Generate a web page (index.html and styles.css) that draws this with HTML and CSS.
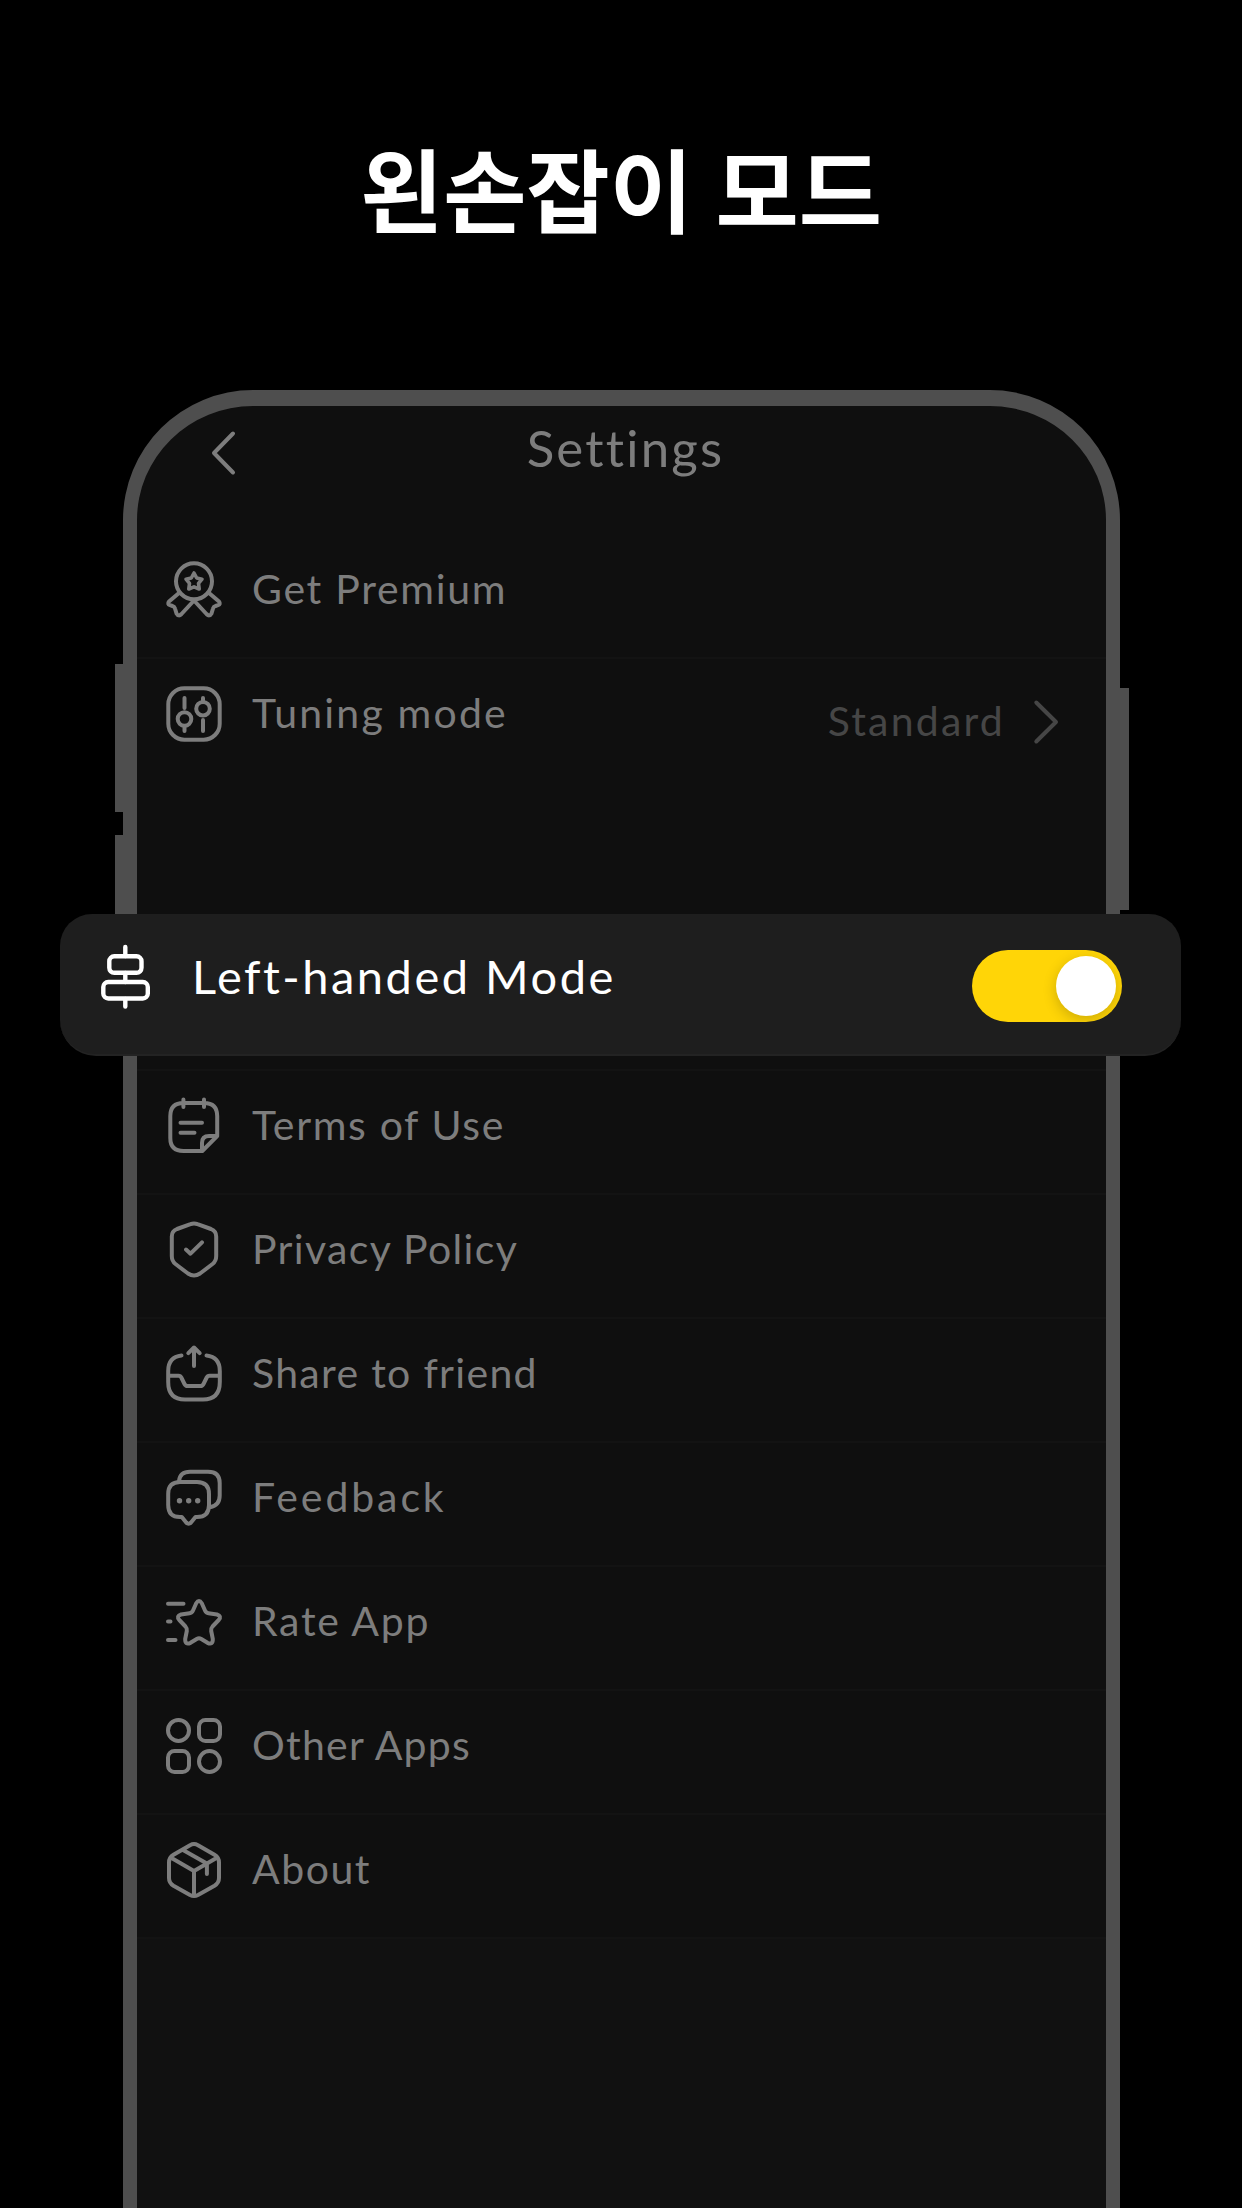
FILE: index.html
```html
<!DOCTYPE html>
<html lang="ko">
<head>
<meta charset="utf-8">
<title>왼손잡이 모드</title>
<link rel="stylesheet" href="styles.css">
</head>
<body>
<main class="stage">
  <h1 class="title">왼손잡이 모드</h1>
  <div class="phone">
    <span class="side-button side-button--upper"></span>
    <span class="side-button side-button--lower"></span>
    <span class="side-button side-button--power"></span>
    <header class="topbar">
      <svg class="back" viewBox="0 0 30 50"><path d="M24 5.500 5 25 24 44.500"/></svg>
      <h2 class="heading">Settings</h2>
    </header>
    <ul class="list">
      <li class="row">
        <svg class="icon" viewBox="0 0 60 60"><circle cx="30" cy="21.300" r="18"/><path class="fine" d="M30 13 32.700 18 38 19.200 34.500 23.400 35.200 29 30 26.800 24.800 29 25.500 23.400 22 19.200 27.300 18Z"/><path d="M15 33 5 41.500Q3 44 6 45.200L8.500 46Q10.500 46.500 11 48.500L12.500 53.500Q14.500 57 17.500 54L30 40.500 42.500 54Q45.500 57 47.500 53.500L49 48.500Q49.500 46.500 51.500 46L54 45.200Q57 44 55 41.500L45 33"/></svg>
        <span class="label l-premium">Get Premium</span>
      </li>
      <li class="row row--last">
        <svg class="icon" viewBox="0 0 60 60"><rect x="4.300" y="4.300" width="51.400" height="51.400" rx="16"/><path d="M20.500 14V24M20.500 42V47M39 14V17M39 36V47"/><circle cx="20.500" cy="35" r="6.800"/><circle cx="39" cy="24.700" r="6.800"/></svg>
        <span class="label l-tuning">Tuning mode</span>
        <span class="value">Standard</span>
        <svg class="chevron" viewBox="0 0 30 50"><path d="M5.300 5.500 25 25 5.300 44.500"/></svg>
      </li>
    </ul>
    <section class="card">
      <svg class="card-icon" viewBox="0 0 60 72"><path d="M30.300 7V16M30.300 33V42M30.300 59V66.500"/><rect x="14.300" y="16.300" width="32.200" height="16.500" rx="5"/><rect x="8.300" y="42" width="44.500" height="16.500" rx="5"/></svg>
      <span class="card-label">Left-handed Mode</span>
      <span class="toggle"><span class="knob"></span></span>
    </section>
    <ul class="list list--lower">
      <li class="row">
        <svg class="icon" viewBox="0 0 60 60"><path d="M53.200 40V20Q53.200 7 40 7H19.500Q6.300 7 6.300 20V42Q6.300 55 19.500 55H38.300L53.200 40H45Q38 40 38 47V55M19.400 3.500V11M40 3.500V11M16.500 26.700H38M16.500 36.700H30.500"/></svg>
        <span class="label l-terms">Terms of Use</span>
      </li>
      <li class="row">
        <svg class="icon" viewBox="0 0 60 60"><path d="M26.500 4.200Q30 2.800 33.500 4.200L47 9Q52.200 11 52.200 16.500V36Q52.200 41 48.500 44L36 53.500Q30 57.500 24 53.500L11.500 44Q7.800 41 7.800 36V16.500Q7.800 11 13 9ZM22 29.500 26.500 33.700 38 22.300"/></svg>
        <span class="label l-privacy">Privacy Policy</span>
      </li>
      <li class="row">
        <svg class="icon" viewBox="0 0 60 60"><path d="M17.500 11.500Q4.200 13 4.200 27V38Q4.200 55.500 21 55.500H39Q55.800 55.500 55.800 38V27Q55.800 13 42.500 11.500M4.200 31.700H14.500Q16.500 31.700 17.300 33.500L20.500 40Q21.500 42 23.500 42H36.500Q38.500 42 39.500 40L42.700 33.500Q43.500 31.700 45.500 31.700H55.800M30 22V3.500M24.300 9.200 30 3.500 35.700 9.200"/></svg>
        <span class="label l-share">Share to friend</span>
      </li>
      <li class="row">
        <svg class="icon" viewBox="0 0 60 60"><path d="M16 14H33Q45 14 45 26V37Q45 49 33 49H31.500L27 54.500Q24.600 57 22.200 54.500L17.800 49H16Q4.200 49 4.200 37V26Q4.200 14 16 14ZM15 13Q16 3.800 26 3.800H44Q55.700 3.800 55.700 15V27.500Q55.700 37.500 46 39.200"/><path class="dots" d="M15.500 32.700h.01M24.700 32.700h.01M33.700 32.700h.01"/></svg>
        <span class="label l-feedback">Feedback</span>
      </li>
      <li class="row">
        <svg class="icon" viewBox="0 0 60 60"><path d="M4 11.700H19.500M4 29.500H6.500M4 48H11.500"/><path d="M32.200 11.300Q35 6.800 37.800 11.300L41 18.500Q42 21 44.500 21.300L53 22.500Q58 24 54.700 28L48.500 34.500Q46.800 36.400 47.200 39L48.800 47Q49 53.200 43.500 50.800L37.300 47Q35 45.700 32.700 47L26.500 50.800Q21 53.200 21.200 47L22.800 39Q23.200 36.400 21.500 34.500L15.300 28Q12 24 17 22.500L25.500 21.300Q28 21 29 18.500Z"/></svg>
        <span class="label l-rate">Rate App</span>
      </li>
      <li class="row">
        <svg class="icon" viewBox="0 0 60 60"><circle cx="14.500" cy="14.400" r="10.500"/><rect x="35" y="4" width="21" height="21" rx="6.500"/><rect x="4" y="35" width="21" height="21" rx="6.500"/><circle cx="45.500" cy="45.500" r="10.500"/></svg>
        <span class="label l-other">Other Apps</span>
      </li>
      <li class="row">
        <svg class="icon" viewBox="0 0 60 60"><path d="M26 5.200Q30 3 34 5.200L50.500 14.800Q55 17.500 55 22.500V38Q55 43 50.500 45.700L34 55Q30 57 26 55L9.500 45.700Q5 43 5 38V22.500Q5 17.500 9.500 14.800ZM6.700 17.500 30 31 53.300 17.500M30 31V56M19 10 42.900 23.500V34"/></svg>
        <span class="label l-about">About</span>
      </li>
    </ul>
    <div class="rest"></div>
  </div>
</main>
</body>
</html>
```
FILE: styles.css
```css
* { box-sizing: border-box; }

body {
  margin: 0;
  background: #000;
  font-family: Lato, "Noto Sans CJK KR", sans-serif;
  font-variant-ligatures: none;
}

.stage {
  display: flex;
  flex-direction: column;
  width: 1242px;
  height: 2208px;
  overflow: hidden;
  background: #000;
}

.title {
  flex: none;
  height: 390px;
  margin: 0;
  padding-top: 122px;
  color: #fff;
  font: 700 90.500px/130px "Noto Sans CJK KR", sans-serif;
  word-spacing: -3px;
  text-align: center;
}

.phone {
  position: relative;
  flex: none;
  display: flex;
  flex-direction: column;
  width: 997px;
  height: 1900px;
  margin-left: 123px;
  border: 14px solid #4e4e4e;
  border-top-width: 16px;
  border-radius: 130px 130px 0 0;
  background: #0f0f0f;
}

/* hardware buttons sit outside the phone frame */
.side-button {
  position: absolute;
  width: 9px;
  background: #4e4e4e;
}
.side-button--upper { left: -22px; top: 258px; height: 148px; }
.side-button--lower { left: -22px; top: 429px; height: 100px; }
.side-button--power { right: -23px; top: 282px; height: 222px; }

svg {
  flex: none;
  fill: none;
  stroke: #7d7d7d;
  stroke-width: 4;
  stroke-linecap: round;
  stroke-linejoin: round;
}

.topbar {
  display: grid;
  grid-template-columns: 72px 1fr 72px;
  height: 129px;
}
.back { width: 30px; height: 50px; margin: 22px 0 0 72px; }
.heading {
  margin: 10px 0 0 8px;
  color: #7d7d7d;
  font-size: 51px;
  font-weight: 400;
  line-height: 64px;
  letter-spacing: 2.200px;
  text-align: center;
}

.list { margin: 0; padding: 0; list-style: none; }
.list--lower { margin-top: 13px; border-top: 2px solid #131313; }

.row {
  display: flex;
  height: 124px;
  padding: 25px 45px 0 27px;
  border-bottom: 2px solid #131313;
}
.row--last { border-bottom-color: transparent; }

.icon { width: 60px; height: 60px; }
.fine { stroke-width: 3.600; }
.dots { stroke-width: 5.400; }

.label {
  margin: -1px 0 0 28px;
  color: #7d7d7d;
  font-size: 41px;
  line-height: 60px;
  white-space: nowrap;
}

/* tracking tuned per label */
.l-premium { letter-spacing: 1.700px; }
.l-tuning { letter-spacing: 2.200px; }
.l-terms { letter-spacing: 1.650px; }
.l-privacy { letter-spacing: 1.350px; }
.l-share { letter-spacing: 1.300px; }
.l-feedback { letter-spacing: 2.900px; }
.l-rate { letter-spacing: 1.700px; }
.l-other { letter-spacing: 1.250px; }
.l-about { letter-spacing: 1.500px; }

.value {
  margin: 7px 26px 0 auto;
  color: #464646;
  font-size: 41px;
  line-height: 60px;
  letter-spacing: 2.200px;
}
.chevron { width: 30px; height: 50px; margin-top: 13px; stroke: #464646; }

.card {
  position: relative;
  flex: none;
  display: flex;
  height: 142px;
  margin: 131px -75px 0 -77px;
  padding: 26px 59px 0 35px;
  border-bottom: 2px solid #232323;
  border-radius: 32px 32px 36px 36px;
  background: #1e1e1e;
}
.card-icon { width: 60px; height: 72px; stroke: #fff; stroke-width: 4.400; }
.card-label {
  margin: 4px 0 0 37px;
  color: #fff;
  font-size: 47px;
  line-height: 64px;
  letter-spacing: 2.500px;
  white-space: nowrap;
}
.toggle {
  display: flex;
  width: 150px;
  height: 72px;
  margin: 9.500px 0 0 auto;
  padding: 6px;
  justify-content: flex-end;
  border-radius: 36px;
  background: #ffd507;
  overflow: hidden;
}
.knob {
  width: 60px;
  height: 60px;
  border-radius: 50%;
  background: #fff;
  box-shadow: 0 4px 14px rgba(0, 0, 0, .2);
}

.rest { flex: 1; background: #111; }
```
